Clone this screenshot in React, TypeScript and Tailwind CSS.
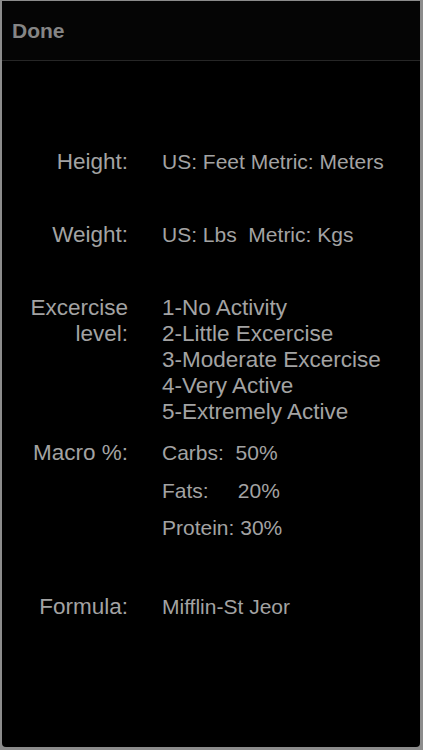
const FONT = "font-['Liberation_Sans',Arial,sans-serif]";

type Row = { label: string[]; values: string[]; gap: string; valueClass?: string };

const ROWS: Row[] = [
  { label: ["Height:"], values: ["US: Feet Metric: Meters"], gap: "mt-[88px]" },
  { label: ["Weight:"], values: ["US: Lbs  Metric: Kgs"], gap: "mt-[47px]" },
  {
    label: ["Excercise", "level:"],
    values: [
      "1-No Activity",
      "2-Little Excercise",
      "3-Moderate Excercise",
      "4-Very Active",
      "5-Extremely Active",
    ],
    gap: "mt-[47px]",
    valueClass: "text-[22.5px]",
  },
  {
    label: ["Macro %:"],
    values: ["Carbs:  50%", "Fats:     20%", "Protein: 30%"],
    gap: "mt-[15px]",
    valueClass: "gap-[11.5px]",
  },
  { label: ["Formula:"], values: ["Mifflin-St Jeor"], gap: "mt-[53px]" },
];

export default function App() {
  return (
    <div className={`h-[750px] w-[423px] bg-[#8c8c8c] pl-[2px] pr-[3px] pt-[1px] pb-[3px] ${FONT}`}>
      <div className="flex h-full flex-col overflow-hidden rounded-b-[4px] bg-black">
        {/* header */}
        <div className="flex h-[60px] shrink-0 items-center border-b border-[#262626] bg-[#050505] pl-[10px]">
          <span className="text-[21px] font-bold text-[#858585]">Done</span>
        </div>

        {/* settings info */}
        <div className="flex flex-col text-[21px] leading-[26px] text-[#a3a3a3]">
          {ROWS.map((row) => (
            <div key={row.label.join(" ")} className={`flex ${row.gap}`}>
              <div className="w-[126px] shrink-0 text-right text-[22.5px]">
                {row.label.map((l) => (
                  <div key={l}>{l}</div>
                ))}
              </div>
              <div className={`ml-[34px] flex flex-col whitespace-pre ${row.valueClass ?? ""}`}>
                {row.values.map((v) => (
                  <div key={v}>{v}</div>
                ))}
              </div>
            </div>
          ))}
        </div>
      </div>
    </div>
  );
}
